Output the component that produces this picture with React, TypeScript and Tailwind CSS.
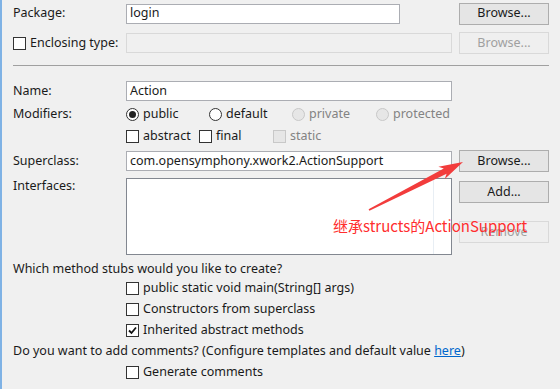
import React from "react";

const font = { fontFamily: '"Noto Sans", "Noto Sans CJK SC", sans-serif' };

function Btn({ children, disabled, className = "" }: { children: React.ReactNode; disabled?: boolean; className?: string }) {
  return (
    <div
      className={
        "w-[90px] h-[22px] flex items-center justify-center text-[12.5px] " +
        (disabled
          ? "border border-[#d9d9d9] bg-[#efefef] text-[#a0a0a0] "
          : "border border-[#adadad] bg-[#e5e5e5] text-[#1a1a1a] ") +
        className
      }
    >
      {children}
    </div>
  );
}

function Check({ checked, disabled }: { checked?: boolean; disabled?: boolean }) {
  return (
    <div
      className={
        "w-[13px] h-[13px] border flex items-center justify-center shrink-0 " +
        (disabled ? "border-[#c8c8c8] bg-[#e6e6e6]" : "border-[#333333] bg-white")
      }
    >
      {checked && (
        <svg width="9" height="9" viewBox="0 0 9 9">
          <path d="M1 4.5 L3.5 7 L8 1.5" fill="none" stroke="#111" strokeWidth="1.8" />
        </svg>
      )}
    </div>
  );
}

function Radio({ checked, disabled }: { checked?: boolean; disabled?: boolean }) {
  return (
    <div
      className={
        "w-[13px] h-[13px] rounded-full border flex items-center justify-center shrink-0 " +
        (disabled ? "border-[#c8c8c8] bg-[#e6e6e6]" : "border-[#333333] bg-white")
      }
    >
      {checked && <div className="w-[7px] h-[7px] rounded-full bg-[#222]" />}
    </div>
  );
}

export default function App() {
  return (
    <div
      className="relative w-[560px] h-[389px] bg-[#f0f0f0] text-[12.5px] text-[#1a1a1a] overflow-hidden border-l-2 border-[#7fb2e5]"
      style={font}
    >
      <div className="flex flex-col pl-[11px]">
        {/* Package */}
        <div className="flex items-center h-[23px] mt-[2px]">
          <div className="w-[113px]">Package:</div>
          <div className="w-[274px] h-[20px] border border-[#abadb3] bg-white flex items-center px-[3px]">login</div>
          <div className="w-[59px]" />
          <Btn>Browse...</Btn>
        </div>
        {/* Enclosing */}
        <div className="flex items-center h-[22px] mt-[7px]">
          <div className="w-[113px] flex items-center gap-[4px]">
            <Check />
            <span>Enclosing type:</span>
          </div>
          <div className="w-[326px] h-[20px] border border-[#d9d9d9] bg-[#f0f0f0]" />
          <div className="w-[7px]" />
          <Btn disabled>Browse...</Btn>
        </div>
        {/* separator */}
        <div className="w-[536px] h-px bg-[#a0a0a0] mt-[11px]" />
        {/* Name */}
        <div className="flex items-center h-[20px] mt-[15px]">
          <div className="w-[113px]">Name:</div>
          <div className="w-[326px] h-[20px] border border-[#abadb3] bg-white flex items-center px-[3px]">Action</div>
        </div>
        {/* Modifiers */}
        <div className="flex items-center h-[20px] mt-[3px]">
          <div className="w-[113px]">Modifiers:</div>
          <div className="flex items-center gap-[4px] w-[83px]">
            <Radio checked />
            <span>public</span>
          </div>
          <div className="flex items-center gap-[4px] w-[83px]">
            <Radio />
            <span>default</span>
          </div>
          <div className="flex items-center gap-[4px] w-[84px] text-[#838383]">
            <Radio disabled />
            <span>private</span>
          </div>
          <div className="flex items-center gap-[4px] text-[#838383]">
            <Radio disabled />
            <span>protected</span>
          </div>
        </div>
        <div className="flex items-center h-[20px] mt-[2px]">
          <div className="w-[113px]" />
          <div className="flex items-center gap-[4px] w-[73px]">
            <Check />
            <span>abstract</span>
          </div>
          <div className="flex items-center gap-[4px] w-[74px]">
            <Check />
            <span>final</span>
          </div>
          <div className="flex items-center gap-[4px] text-[#838383]">
            <Check disabled />
            <span>static</span>
          </div>
        </div>
        {/* Superclass */}
        <div className="flex items-center h-[22px] mt-[4px]">
          <div className="w-[113px]">Superclass:</div>
          <div className="w-[326px] h-[20px] border border-[#abadb3] bg-white flex items-center px-[3px]">
            com.opensymphony.xwork2.ActionSupport
          </div>
          <div className="w-[7px]" />
          <Btn>Browse...</Btn>
        </div>
        {/* Interfaces */}
        <div className="flex items-start mt-[6px]">
          <div className="w-[113px] leading-[16px]">Interfaces:</div>
          <div className="relative w-[326px] h-[77px] border border-[#828790] bg-white">
            <div className="absolute left-[306px] top-0 bottom-0 w-px bg-[#e8eef4]" />
          </div>
          <div className="w-[7px]" />
          <div className="flex flex-col gap-[18px] mt-[3px]">
            <Btn>Add...</Btn>
            <Btn disabled>Remove</Btn>
          </div>
        </div>
        {/* method stubs */}
        <div className="h-[18px] flex items-center mt-[5px]">Which method stubs would you like to create?</div>
        <div className="flex flex-col pl-[113px]">
          <div className="h-[21px] flex items-center gap-[4px]">
            <Check />
            <span>public static void main(String[] args)</span>
          </div>
          <div className="h-[21px] flex items-center gap-[4px]">
            <Check />
            <span>Constructors from superclass</span>
          </div>
          <div className="h-[21px] flex items-center gap-[4px]">
            <Check checked />
            <span>Inherited abstract methods</span>
          </div>
        </div>
        <div className="h-[21px] flex items-center">
          Do you want to add comments? (Configure templates and default value&nbsp;
          <span className="text-[#0066cc] underline">here</span>)
        </div>
        <div className="flex pl-[113px]">
          <div className="h-[21px] flex items-center gap-[4px]">
            <Check />
            <span>Generate comments</span>
          </div>
        </div>
      </div>

      {/* annotation arrow */}
      <svg className="absolute left-[-2px] top-0" width="560" height="389" viewBox="0 0 560 389">
        <polygon
          points="368.6,209.3 443.8,168.4 438.4,166.7 463,162 444.8,179.1 446.6,173.8 369.4,210.7"
          fill="#f23c3c"
        />
      </svg>
      <div
        className="absolute left-[331px] top-[216px] text-[15px] leading-[20px] text-[#ff2e2e]"
        style={{ fontFamily: '"Noto Sans CJK SC", "Noto Sans", sans-serif' }}
      >
        继承structs的ActionSupport
      </div>
    </div>
  );
}
